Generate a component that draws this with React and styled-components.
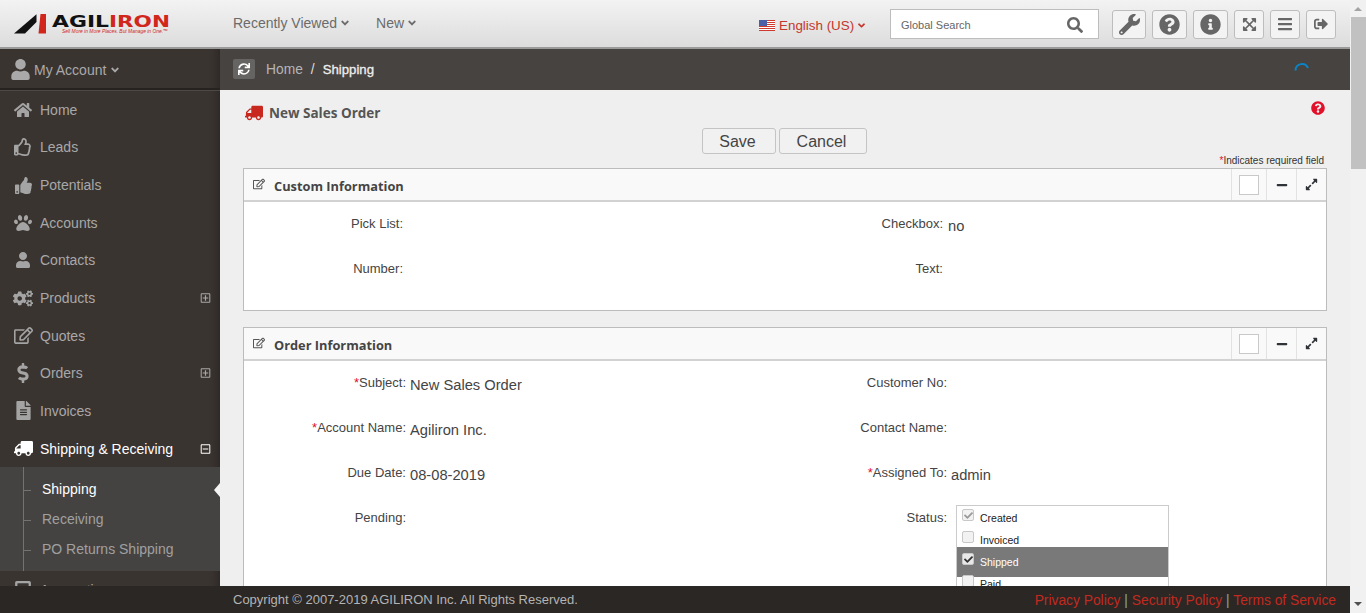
import React from "react";
import styled, { createGlobalStyle } from "styled-components";
import {
  FaHome, FaRegThumbsUp, FaThumbsUp, FaPaw, FaUser, FaCogs, FaRegEdit, FaDollarSign, FaFileAlt, FaTruck,
  FaSync, FaWrench, FaQuestionCircle, FaInfoCircle, FaExpandArrowsAlt, FaBars, FaSignOutAlt, FaExpandAlt,
  FaMinus, FaSearch, FaRegPlusSquare, FaRegMinusSquare, FaAngleDown, FaCheck, FaCalculator,
} from "react-icons/fa";

const Global = createGlobalStyle`
  html, body { margin: 0; padding: 0; height: 100%; overflow: hidden; }
  body { font-family: "Liberation Sans", Arial, sans-serif; }
  * { box-sizing: border-box; }
`;

const Page = styled.div`
  position: relative; width: 1366px; height: 613px; overflow: hidden; display: flex; background: #f1f1f1;
`;
const Main = styled.div`
  width: 1350px; height: 613px; display: flex; flex-direction: column; flex: none;
`;
const Header = styled.header`
  height: 49px; flex: none; display: flex; align-items: center;
  background: linear-gradient(#f3f3f3, #dcdcdc); border-bottom: 2px solid #9a9a9a;
`;
const LogoBox = styled.div`
  width: 233px; flex: none; height: 47px;
  svg { display: block; }
`;
const NavItem = styled.div`
  display: flex; align-items: center; gap: 2px; font-size: 14px; color: #6b6b6b;
  margin-right: ${(p) => p.$mr || 0}px; margin-top: -2px;
`;
const Lang = styled.div`
  margin-left: auto; display: flex; align-items: center; font-size: 13.4px; color: #c5372c; margin-top: 4px; width: 131px;
  svg.flag { margin-right: 4px; }
`;
const SearchBox = styled.div`
  width: 209px; height: 30px; background: #fff; border: 1px solid #bdbdbd; display: flex; align-items: center;
  justify-content: space-between; padding: 1px 15px 0 10px; font-size: 11px; color: #666; margin-right: 13px; margin-top: 1px;
`;
const IconBtns = styled.div`
  display: flex; gap: 6px; margin-right: 14px; margin-top: 1px;
`;
const IconBtn = styled.div`
  width: ${(p) => p.$w}px; height: 29px; border: 1px solid #bdbdbd; border-radius: 3px; background: #f3f3f3;
  display: flex; align-items: center; justify-content: center; color: #666;
`;

const Body = styled.div`
  flex: 1; min-height: 0; display: flex;
`;
const Sidebar = styled.aside`
  width: 220px; flex: none; background: #3a3431; overflow: hidden; position: relative;
  box-shadow: inset -9px 0 8px -7px rgba(0, 0, 0, 0.3);
`;
const AccountRow = styled.div`
  height: 41px; display: flex; align-items: center; padding: 2px 0 0 10px; color: #a9a9a9; font-size: 14px;
  border-bottom: 2px solid #262220; gap: 3px; box-shadow: 0 1px 0 #4d4845;
  svg:first-child { color: #a9a9a9; }
`;
const MenuList = styled.nav`
  padding-top: 1px;
`;
const MenuItem = styled.div`
  height: 37.65px; display: flex; align-items: center; position: relative; padding-left: 13px;
  font-size: 14px; color: ${(p) => (p.$active ? "#fff" : "#a8a8a8")};
`;
const MenuIcon = styled.span`
  width: 20px; margin-right: 7px; display: flex; justify-content: center; flex: none;
  color: ${(p) => (p.$active ? "#fff" : "#a4a4a4")};
`;
const Toggle = styled.span`
  position: absolute; right: 9px; top: 50%; transform: translateY(-50%); display: flex; font-size: 11px;
`;
const SubMenu = styled.div`
  position: relative; background: #454342; padding: 7px 0 7px; margin-top: -0.5px;
  &::before { content: ""; position: absolute; left: 23px; top: 0; bottom: 0; width: 1px; background: #75716f; }
`;
const SubItem = styled.div`
  height: 30px; line-height: 30px; padding-left: 42px; font-size: 14px; position: relative;
  color: ${(p) => (p.$active ? "#fff" : "#a0a0a0")};
  &::before { content: ""; position: absolute; left: 24px; top: 16px; width: 7px; height: 1px; background: #75716f; }
  ${(p) =>
    p.$active &&
    `&::after { content: ""; position: absolute; right: 0; top: 9px; border: 7px solid transparent; border-right: 6px solid #f4f4f4; border-left: 0; }`}
`;

const Content = styled.main`
  flex: 1; min-width: 0; display: flex; flex-direction: column; overflow: hidden; background: #efefef;
`;
const Crumbs = styled.div`
  height: 41px; flex: none; background: #474341; display: flex; align-items: center; padding: 0 0 1px 13px;
  font-size: 13.8px; color: #b5b5b5; position: relative;
`;
const Refresh = styled.span`
  width: 22px; height: 20px; background: #666463; border-radius: 2px; display: flex; align-items: center;
  justify-content: center; color: #fff; margin: 0 11px 0 0;
`;
const CrumbSep = styled.span`
  margin: 0 8px; color: #ddd;
`;
const CrumbNow = styled.span`
  color: #eee; font-size: 13.2px; -webkit-text-stroke: 0.3px #eee;
`;
const Spinner = styled.svg`
  position: absolute; left: 1074px; top: 13px; width: 16px; height: 16px; fill: none; stroke: #0b84c6; stroke-width: 2;
`;
const Inner = styled.div`
  padding: 0 23px; display: flex; flex-direction: column;
`;
const TitleRow = styled.div`
  height: 38px; display: flex; align-items: center; justify-content: space-between; padding: 7px 2px 0 2px; flex: none;
`;
const Title = styled.h1`
  margin: 0; display: flex; align-items: center; gap: 6px; font-family: "Open Sans", sans-serif; font-weight: 700;
  font-size: 13.5px; color: #555;
  svg { color: #c8281e; transform: scaleX(-1); }
`;
const HelpDot = styled.span`
  display: flex; color: #e3102a; margin-top: -9px;
`;
const Buttons = styled.div`
  display: flex; justify-content: center; gap: 3px; flex: none; padding-right: 2px;
`;
const Button = styled.button`
  height: 26px; width: ${(p) => p.$w}px; border: 1px solid #c4c4c4; border-radius: 3px; background: #f1f1f1;
  font-family: "Liberation Sans", sans-serif; font-size: 16px; color: #444; padding: 2px 2px 0 0;
`;
const Required = styled.div`
  text-align: right; height: 14px; line-height: 13px; font-size: 10px; color: #333; padding-right: 3px; flex: none;
  span { color: #e3102a; }
`;
const Panel = styled.section`
  border: 1px solid #bcbcbc; background: #fff; margin-bottom: 16px; flex: none;
`;
const PanelHead = styled.div`
  height: 33px; display: flex; align-items: center; background: #f9f9f9; border-bottom: 2px solid #d2d2d2;
`;
const PanelTitle = styled.h2`
  margin: 0; flex: 1; display: flex; align-items: center; gap: 9px; padding: 3px 0 0 9px;
  font-family: "Open Sans", sans-serif; font-weight: 700; font-size: 12.8px; color: #444;
  svg { color: #555; margin-top: -4px; }
`;
const HeadCell = styled.div`
  width: ${(p) => p.$w}px; height: 100%; border-left: 1px solid #e2e2e2; display: flex; align-items: center;
  justify-content: center; color: #2f3338;
`;
const CheckBoxSquare = styled.span`
  width: 20px; height: 20px; border: 1px solid #c9c9c9; background: #fff; display: block;
`;
const FieldGrid = styled.div`
  display: grid; grid-template-columns: ${(p) => p.$cols}; column-gap: ${(p) => p.$gap}px; row-gap: 22px;
  padding: 11px 0 ${(p) => p.$pb}px;
`;
const Label = styled.div`
  text-align: right; font-size: 13px; line-height: 20px; color: #444; height: 20px; margin-top: 1px;
  span { color: #e3102a; }
`;
const Value = styled.div`
  font-size: 14.7px; line-height: 20px; color: #444; margin-top: 3px; height: 20px;
`;
const StatusList = styled.div`
  margin: -2px 0 0 5px; width: 213px; border: 1px solid #cbcbcb; background: #fff; height: 120px;
`;
const StatusOption = styled.div`
  height: ${(p) => (p.$sel ? 30 : 22)}px; margin: ${(p) => (p.$sel ? "-3px 0 -5px" : 0)}; display: flex; align-items: center;
  padding: ${(p) => (p.$sel ? 0 : 2)}px 0 0 5px; gap: 6px; font-size: 10.5px; position: relative;
  background: ${(p) => (p.$sel ? "#797979" : "transparent")}; color: ${(p) => (p.$sel ? "#fff" : "#222")};
`;
const OptionBox = styled.span`
  width: 12px; height: 12px; border: 1px solid #c8c8c8; border-radius: 2px; flex: none; margin-top: -6px;
  background: ${(p) => (p.$sel ? "#e8e8e8" : "#f2f2f2")}; display: flex; align-items: center; justify-content: center;
  color: ${(p) => (p.$sel ? "#333" : "#9a9a9a")}; position: relative;
`;
const Footer = styled.footer`
  position: absolute; left: 0; bottom: 0; width: 1350px; height: 27px; background: #2b2725; display: flex; align-items: center;
  justify-content: space-between; padding: 0 14px 0 233px; font-size: 13px; color: #b4b4b4; z-index: 2;
`;
const Links = styled.div`
  color: #c22a1f; margin-top: 2px; font-size: 13.8px;
  span { color: #7fa8bd; }
`;
const Scrollbar = styled.div`
  flex: 1; position: relative; background: #f1f1f1;
`;
const Thumb = styled.div`
  position: absolute; left: 1px; right: 0; top: 17px; height: 152px; background: #c1c1c1;
`;
const Arrow = styled.span`
  position: absolute; left: 4px; width: 0; height: 0; border-left: 4px solid transparent; border-right: 4px solid transparent;
  ${(p) => (p.$up ? "top: 7px; border-bottom: 4px solid #a3a3a3;" : "bottom: 7px; border-top: 4px solid #505050;")}
`;

const Logo = () => (
  <svg width="180" height="47" viewBox="0 0 180 47">
    <polygon points="14,33.5 36.5,14.2 36.5,22 25,33.5" fill="#111" />
    <polygon points="38.5,33.5 40.5,14 46,14 46,33.5" fill="#d0261c" />
    <text x="52" y="27" fontFamily="DejaVu Sans" fontWeight="700" fontSize="15" fill="#111" textLength="57" lengthAdjust="spacingAndGlyphs">AGIL</text>
    <text x="109" y="27" fontFamily="DejaVu Sans" fontWeight="700" fontSize="15" fill="#d0261c" textLength="61" lengthAdjust="spacingAndGlyphs">IRON</text>
    <text x="62" y="33" fontFamily="Liberation Sans" fontStyle="italic" fontSize="5.4" fill="#d0261c" textLength="106" lengthAdjust="spacingAndGlyphs">Sell More in More Places. But Manage in One.™</text>
  </svg>
);

const Flag = () => (
  <svg className="flag" width="16" height="11" viewBox="0 0 16 11">
    <rect width="16" height="11" fill="#fff" />
    {[0, 2, 4, 6, 8, 10].map((y) => (
      <rect key={y} y={y} width="16" height="1" fill="#d0392e" />
    ))}
    <rect width="8" height="6" fill="#4a5fa8" />
  </svg>
);

const menu = [
  { icon: <FaHome size={18} />, label: "Home" },
  { icon: <FaRegThumbsUp size={18} />, label: "Leads" },
  { icon: <FaThumbsUp size={17} />, label: "Potentials" },
  { icon: <FaPaw size={18} />, label: "Accounts" },
  { icon: <FaUser size={16} />, label: "Contacts" },
  { icon: <FaCogs size={21} />, label: "Products", toggle: "plus" },
  { icon: <FaRegEdit size={19} />, label: "Quotes" },
  { icon: <FaDollarSign size={20} />, label: "Orders", toggle: "plus" },
  { icon: <FaFileAlt size={19} />, label: "Invoices" },
  { icon: <FaTruck size={19} style={{ transform: "scaleX(-1)" }} />, label: "Shipping & Receiving", toggle: "minus", active: true },
];

const statuses = [
  { label: "Created", checked: true },
  { label: "Invoiced" },
  { label: "Shipped", checked: true, sel: true },
  { label: "Paid" },
];

const PanelHeader = ({ title }) => (
  <PanelHead>
    <PanelTitle>
      <FaRegEdit size={12} />
      {title}
    </PanelTitle>
    <HeadCell $w={35}><CheckBoxSquare /></HeadCell>
    <HeadCell $w={30}><FaMinus size={12} /></HeadCell>
    <HeadCell $w={30}><FaExpandAlt size={13} /></HeadCell>
  </PanelHead>
);

export default function App() {
  return (
    <Page>
      <Global />
      <Main>
        <Header>
          <LogoBox><Logo /></LogoBox>
          <NavItem $mr={25}>Recently Viewed <FaAngleDown size={12} /></NavItem>
          <NavItem>New <FaAngleDown size={12} /></NavItem>
          <Lang><Flag />English (US)<FaAngleDown size={11} style={{ marginLeft: 2 }} /></Lang>
          <SearchBox>Global Search <FaSearch size={16} color="#666" /></SearchBox>
          <IconBtns>
            <IconBtn $w={34}><FaWrench size={21} /></IconBtn>
            <IconBtn $w={35}><FaQuestionCircle size={21} /></IconBtn>
            <IconBtn $w={35}><FaInfoCircle size={21} /></IconBtn>
            <IconBtn $w={30}><FaExpandArrowsAlt size={15} /></IconBtn>
            <IconBtn $w={30}><FaBars size={16} /></IconBtn>
            <IconBtn $w={30}><FaSignOutAlt size={14} /></IconBtn>
          </IconBtns>
        </Header>
        <Body>
          <Sidebar>
            <AccountRow>
              <FaUser size={21} />
              My Account
              <FaAngleDown size={12} />
            </AccountRow>
            <MenuList>
              {menu.map((m) => (
                <MenuItem key={m.label} $active={m.active}>
                  <MenuIcon $active={m.active}>{m.icon}</MenuIcon>
                  {m.label}
                  {m.toggle && <Toggle>{m.toggle === "plus" ? <FaRegPlusSquare /> : <FaRegMinusSquare />}</Toggle>}
                </MenuItem>
              ))}
              <SubMenu>
                <SubItem $active>Shipping</SubItem>
                <SubItem>Receiving</SubItem>
                <SubItem>PO Returns Shipping</SubItem>
              </SubMenu>
              <MenuItem>
                <MenuIcon><FaCalculator size={18} /></MenuIcon>
                Accounting
              </MenuItem>
            </MenuList>
          </Sidebar>
          <Content>
            <Crumbs>
              <Refresh><FaSync size={12} /></Refresh>
              Home<CrumbSep>/</CrumbSep><CrumbNow>Shipping</CrumbNow>
              <Spinner viewBox="0 0 16 16"><path d="M1.5 8.5A6.5 6.5 0 0 1 14 6" /></Spinner>
            </Crumbs>
            <Inner>
              <TitleRow>
                <Title><FaTruck size={18} />New Sales Order</Title>
                <HelpDot><FaQuestionCircle size={14} /></HelpDot>
              </TitleRow>
              <Buttons>
                <Button $w={74}>Save</Button>
                <Button $w={88}>Cancel</Button>
              </Buttons>
              <Required><span>*</span>Indicates required field</Required>
              <Panel>
                <PanelHeader title="Custom Information" />
                <FieldGrid $cols="159px 330px 200px 1fr" $gap={5} $pb={29}>
                  <Label>Pick List:</Label><Value />
                  <Label>Checkbox:</Label><Value>no</Value>
                  <Label>Number:</Label><Value />
                  <Label>Text:</Label><Value />
                </FieldGrid>
              </Panel>
              <Panel>
                <PanelHeader title="Order Information" />
                <FieldGrid $cols="162px 333px 200px 1fr" $gap={4} $pb={32}>
                  <Label><span>*</span>Subject:</Label><Value>New Sales Order</Value>
                  <Label>Customer No:</Label><Value />
                  <Label><span>*</span>Account Name:</Label><Value>Agiliron Inc.</Value>
                  <Label>Contact Name:</Label><Value />
                  <Label>Due Date:</Label><Value>08-08-2019</Value>
                  <Label><span>*</span>Assigned To:</Label><Value>admin</Value>
                  <Label>Pending:</Label><Value />
                  <Label>Status:</Label>
                  <StatusList>
                    {statuses.map((s) => (
                      <StatusOption key={s.label} $sel={s.sel}>
                        <OptionBox $sel={s.sel}>{s.checked && <FaCheck size={9} />}</OptionBox>
                        {s.label}
                      </StatusOption>
                    ))}
                  </StatusList>
                </FieldGrid>
              </Panel>
            </Inner>
          </Content>
        </Body>
      </Main>
      <Scrollbar>
        <Arrow $up />
        <Thumb />
        <Arrow />
      </Scrollbar>
      <Footer>
        <div>Copyright © 2007-2019 AGILIRON Inc. All Rights Reserved.</div>
        <Links>Privacy Policy <span>|</span> Security Policy <span>|</span> Terms of Service</Links>
      </Footer>
    </Page>
  );
}
